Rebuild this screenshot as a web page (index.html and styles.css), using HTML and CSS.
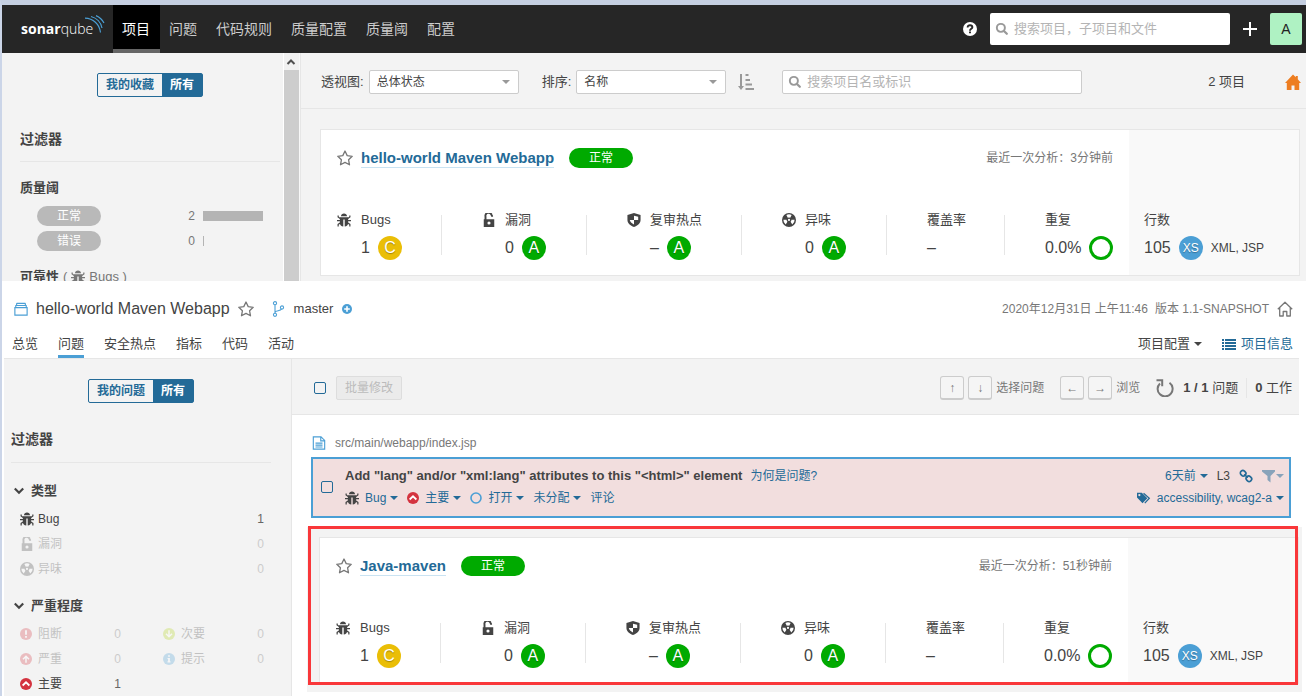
FILE: index.html
```html
<!DOCTYPE html>
<html lang="zh-CN">
<head>
<meta charset="utf-8">
<title>SonarQube</title>
<link rel="stylesheet" href="styles.css">
</head>
<body>
<svg class="sprite" aria-hidden="true">
  <symbol id="bug" viewBox="0 0 16 16"><path fill="currentColor" d="M4.500 3.600C4.800 1.600 6 .6 8 .6s3.200 1 3.500 3zM3.300 4.800h9.400v7c0 2-1.600 3.500-3.900 3.700V7.500H7.200v8c-2.300-.2-3.900-1.700-3.900-3.700z"/><path fill="none" stroke="currentColor" stroke-width="1.400" d="M1.300 2.800v1.800L4 6.500M14.700 2.800v1.800L12 6.500M0 8.800H4M12 8.800h4M4 11.200l-2.700 1.800v2.300M12 11.200l2.700 1.800v2.300"/></symbol>
  <symbol id="lock" viewBox="0 0 16 16"><path fill="none" stroke="currentColor" stroke-width="2.200" d="M4 8V4.200a3.200 3.200 0 0 1 7-1.800c.4.500.6 1 .6 2"/><path fill="currentColor" fill-rule="evenodd" d="M2 7h12v9H2zM8 9.600a1.800 1.800 0 1 0 0 3.600 1.800 1.800 0 0 0 0-3.600z"/></symbol>
  <symbol id="shield" viewBox="0 0 16 16"><path fill="currentColor" fill-rule="evenodd" d="M8 0l7.500 2.200V8c0 3.800-3.200 6.500-7.500 8C3.700 14.500.5 11.800.5 8V2.200zM8 3.200V8h4.800V4.400zM8 8H3.200c.3 2.200 2.200 3.800 4.800 5z"/></symbol>
  <symbol id="smell" viewBox="0 0 16 16"><circle cx="8" cy="8" r="8" fill="currentColor"/><path class="petal" d="M5 2.300a6.500 6.500 0 0 1 6 0L9.400 5.500a3 3 0 0 0-2.800 0zM1.600 7.600A6.400 6.400 0 0 0 4.200 13l2-3a3 3 0 0 1-1-2.200zM14.400 7.600a6.400 6.400 0 0 1-2.600 5.400l-2-3a3 3 0 0 0 1-2.200z"/><circle class="petal" cx="8" cy="7.900" r="1.200"/></symbol>
  <symbol id="star" viewBox="0 0 16 16"><path fill="none" stroke="currentColor" stroke-width="1.300" stroke-linejoin="round" d="M8 1l2.200 4.600 5 .7-3.600 3.500.9 5L8 12.400l-4.500 2.400.9-5L.8 6.300l5-.7z"/></symbol>
  <symbol id="search" viewBox="0 0 16 16"><circle cx="6.700" cy="6.700" r="4.600" fill="none" stroke="currentColor" stroke-width="2.200"/><path stroke="currentColor" stroke-width="2.600" stroke-linecap="round" d="M10.500 10.500l3 3"/></symbol>
  <symbol id="home" viewBox="0 0 16 16"><path fill="currentColor" d="M8 .5l2.800 2.800V2h2v3.300L16 9h-1.800v7H9.500v-4.500h-3V16H1.800V9H0z"/></symbol>
  <symbol id="home-o" viewBox="0 0 16 16"><path fill="none" stroke="currentColor" stroke-width="1.300" stroke-linejoin="round" d="M.8 8.300L8 1.200l7.200 7.100M2.700 6.800V15h3.500v-4.500h3.600V15h3.500V6.800"/></symbol>
  <symbol id="help" viewBox="0 0 16 16"><circle cx="8" cy="8" r="8" fill="#fff"/><path fill="none" stroke="#262626" stroke-width="2.200" d="M5.300 6.300C5.300 4.500 6.500 3.800 8 3.800s2.700.8 2.700 2.200C10.700 7.800 8 7.800 8 10"/><path fill="#262626" d="M6.900 10.900h2.200v2H6.900z"/></symbol>
  <symbol id="sort" viewBox="0 0 16 16"><path fill="none" stroke="currentColor" stroke-width="2" d="M3 0v14"/><path fill="currentColor" d="M0 12h6l-3 4zM7.500 0h3v2h-3zM7.500 5h4.500v2H7.500zM7.500 9.500h6.500v2H7.500zM7.500 14H16v2H7.500z"/></symbol>
  <symbol id="project" viewBox="0 0 16 16"><path fill="none" stroke="currentColor" stroke-width="1.300" d="M1 6.500h14V15H1zM1.500 4h13M3 1.500h10M2 4v2.500M14 4v2.500M3 1.500V4M13 1.500V4"/></symbol>
  <symbol id="branch" viewBox="0 0 16 16"><g fill="none" stroke="currentColor" stroke-width="1.100"><circle cx="5" cy="2.200" r="1.600"/><circle cx="5" cy="13.800" r="1.600"/><circle cx="12" cy="6.500" r="1.600"/><path d="M5 4v8M5 11.500c.5-2.500 5.500-1 6.500-3.500"/></g></symbol>
  <symbol id="plus-c" viewBox="0 0 16 16"><circle cx="8" cy="8" r="8" fill="currentColor"/><path stroke="#fff" stroke-width="2.600" d="M8 3.500v9M3.500 8h9"/></symbol>
  <symbol id="list" viewBox="0 0 14 14"><path stroke="currentColor" stroke-width="2" d="M0 2h2M3 2h11M0 5h2M3 5h11M0 8h2M3 8h11M0 11h2M3 11h11"/></symbol>
  <symbol id="reload" viewBox="0 0 18 18"><path fill="none" stroke="currentColor" stroke-width="2" d="M13.500 3.800a7.500 7.500 0 1 1-9.500.6M.5 1.200h5.700v6"/></symbol>
  <symbol id="chevron" viewBox="0 0 10 8"><path fill="none" stroke="currentColor" stroke-width="2.200" d="M.8 1.500L5 5.700l4.200-4.200"/></symbol>
  <symbol id="blocker" viewBox="0 0 16 16"><circle cx="8" cy="8" r="8" fill="#d4333f"/><path stroke="#fff" stroke-width="2.400" d="M8 3v6M8 10.700v2.400"/></symbol>
  <symbol id="critical" viewBox="0 0 16 16"><circle cx="8" cy="8" r="8" fill="#d4333f"/><path fill="none" stroke="#fff" stroke-width="2" d="M8 13V4.500M4 8.300l4-4 4 4"/></symbol>
  <symbol id="major" viewBox="0 0 16 16"><circle cx="8" cy="8" r="8" fill="#d4333f"/><path fill="none" stroke="#fff" stroke-width="2.400" d="M3.500 10L8 5.800l4.500 4.200"/></symbol>
  <symbol id="minor" viewBox="0 0 16 16"><circle cx="8" cy="8" r="8" fill="#b0d513"/><path fill="none" stroke="#fff" stroke-width="2" d="M8 3v8.500M4 7.700l4 4 4-4"/></symbol>
  <symbol id="info" viewBox="0 0 16 16"><circle cx="8" cy="8" r="8" fill="#4b9fd5"/><path fill="#fff" d="M6.800 3h2.400v2H6.800zM6 6.500h3.200V11H10v1.500H6V11h.8V8H6z"/></symbol>
  <symbol id="file" viewBox="0 0 16 16"><path fill="none" stroke="currentColor" stroke-width="1.300" d="M1.500 1h8.800L14.500 5v10h-13zM10 1v4.500h4.500M4 8.200h8M4 10.400h8M4 12.600h8"/></symbol>
  <symbol id="link" viewBox="0 0 16 16"><g fill="none" stroke="currentColor" stroke-width="1.900"><rect x="1.500" y="2" width="6.400" height="5.600" rx="2.600" transform="rotate(45 4.700 4.800)"/><rect x="8.100" y="8.400" width="6.400" height="5.600" rx="2.600" transform="rotate(45 11.300 11.200)"/><path d="M6 6l4 4"/></g></symbol>
  <symbol id="funnel" viewBox="0 0 14 14"><path fill="currentColor" d="M0 1h13v1.500L8.500 7v6.500l-3-2.500V7L0 2.500z"/></symbol>
  <symbol id="tags" viewBox="0 0 16 14"><path fill="currentColor" fill-rule="evenodd" d="M0 1h5.500l6.300 6.200L6.300 13 0 6.500zM2.700 2.400a1.300 1.300 0 1 0 0 2.600 1.300 1.300 0 0 0 0-2.600z"/><path fill="none" stroke="currentColor" stroke-width="1.400" d="M7.500 1.500l6.600 5.700-5.200 5.600"/></symbol>
</svg>

<header class="topnav">
  <a class="logo" href="#" aria-label="sonarqube"><span class="logo-text"><b>sonar</b>qube</span><svg class="waves" viewBox="0 0 20 20" aria-hidden="true"><g fill="none" stroke="#4b9fd5" stroke-width="1.200"><path d="M0 3.200C8 3.500 14.500 9 15.500 17.500"/><path d="M6 1.500c5.500 1.500 10 6 11 11.500"/><path d="M11 .6c3.500 1.600 6.500 4.400 8 7.400"/></g></svg></a>
  <nav class="mainmenu">
    <a class="active" href="#">项目</a><a href="#">问题</a><a href="#">代码规则</a><a href="#">质量配置</a><a href="#">质量阈</a><a href="#">配置</a>
  </nav>
  <button class="icon-btn help" aria-label="帮助"><svg class="i14"><use href="#help"/></svg></button>
  <label class="search search-top"><svg class="i14"><use href="#search"/></svg><input type="text" aria-label="搜索" placeholder="搜索项目，子项目和文件"></label>
  <button class="icon-btn add" aria-label="新建"><svg class="i14" viewBox="0 0 14 14"><path stroke="#fff" stroke-width="2" d="M7 0v14M0 7h14"/></svg></button>
  <button class="avatar">A</button>
</header>

<div class="projects">
  <aside class="side side-top">
    <div class="toggle"><button>我的收藏</button><button class="on">所有</button></div>
    <h2 class="filters">过滤器</h2>
    <h3 class="facet">质量阈</h3>
    <div class="gate"><span class="pill grey">正常</span><span class="num">2</span><span class="bar full"></span></div>
    <div class="gate"><span class="pill grey">错误</span><span class="num">0</span><span class="bar"></span></div>
    <h3 class="facet clipped">可靠性 <span class="hint">( <svg class="i14"><use href="#bug"/></svg> Bugs )</span></h3>
  </aside>
  <div class="scroll" aria-hidden="true"><svg class="up" viewBox="0 0 10 8"><path fill="none" stroke="#505050" stroke-width="2" d="M1.500 6L5 2.500 8.500 6"/></svg><div class="thumb"></div></div>
  <main class="list">
    <div class="listbar">
      <label for="view">透视图:</label>
      <span class="select"><select id="view"><option>总体状态</option></select></span>
      <label class="sortlabel" for="sortby">排序:</label>
      <span class="select"><select id="sortby"><option>名称</option></select></span>
      <button class="icon-btn sortbtn" aria-label="升序"><svg class="i16"><use href="#sort"/></svg></button>
      <label class="search search-list"><svg class="i14"><use href="#search"/></svg><input type="text" aria-label="搜索项目" placeholder="搜索项目名或标识"></label>
      <span class="count">2 项目</span>
      <button class="icon-btn homebtn" aria-label="主页"><svg class="i16"><use href="#home"/></svg></button>
    </div>
    <article class="card card-first">
      <div class="body">
        <div class="cardhead">
          <button class="icon-btn star" aria-label="收藏"><svg class="i16"><use href="#star"/></svg></button>
          <a class="name" href="#">hello-world Maven Webapp</a><span class="pill ok">正常</span>
          <span class="when">最近一次分析：3分钟前</span>
        </div>
        <div class="measures">
          <div class="m first"><svg class="i14"><use href="#bug"/></svg><span>Bugs</span><div class="v">1<i class="rate c">C</i></div></div>
          <div class="m"><svg class="i14"><use href="#lock"/></svg><span>漏洞</span><div class="v">0<i class="rate">A</i></div></div>
          <div class="m"><svg class="i14"><use href="#shield"/></svg><span>复审热点</span><div class="v">–<i class="rate">A</i></div></div>
          <div class="m"><svg class="i14"><use href="#smell"/></svg><span>异味</span><div class="v">0<i class="rate">A</i></div></div>
          <div class="m plain"><span>覆盖率</span><div class="v">–</div></div>
          <div class="m plain"><span>重复</span><div class="v">0.0%<i class="rate ring"></i></div></div>
        </div>
      </div>
      <div class="size"><span>行数</span><div class="v">105<i class="rate xs">XS</i><small>XML, JSP</small></div></div>
    </article>
  </main>
</div>

<section class="project">
  <header class="phead">
    <div class="prow">
      <svg class="i14 blue"><use href="#project"/></svg>
      <span class="pname">hello-world Maven Webapp</span>
      <button class="icon-btn star" aria-label="收藏"><svg class="i16"><use href="#star"/></svg></button>
      <svg class="i16 blue branch"><use href="#branch"/></svg>
      <span class="master">master</span>
      <svg class="i10 blue"><use href="#plus-c"/></svg>
      <span class="meta"><span>2020年12月31日 上午11:46</span><span>版本 1.1-SNAPSHOT</span></span>
      <button class="icon-btn star" aria-label="设为主页"><svg class="i16"><use href="#home-o"/></svg></button>
    </div>
    <nav class="tabs">
      <a href="#">总览</a><a class="on" href="#">问题</a><a href="#">安全热点</a><a href="#">指标</a><a href="#">代码</a><a href="#">活动</a>
      <a class="config caret" href="#">项目配置</a>
      <a class="info" href="#"><svg class="i14"><use href="#list"/></svg>项目信息</a>
    </nav>
  </header>
  <div class="issues">
    <aside class="side side-issues">
      <div class="toggle"><button>我的问题</button><button class="on">所有</button></div>
      <h2 class="filters">过滤器</h2>
      <h3 class="fold"><svg class="chev"><use href="#chevron"/></svg>类型</h3>
      <div class="rows">
        <div class="row"><svg class="i14"><use href="#bug"/></svg><span>Bug</span><b>1</b></div>
        <div class="row off"><svg class="i14"><use href="#lock"/></svg><span>漏洞</span><b>0</b></div>
        <div class="row off"><svg class="i14"><use href="#smell"/></svg><span>异味</span><b>0</b></div>
      </div>
      <h3 class="fold"><svg class="chev"><use href="#chevron"/></svg>严重程度</h3>
      <div class="rows two">
        <div class="row off"><svg class="i12"><use href="#blocker"/></svg><span>阻断</span><b>0</b></div>
        <div class="row off"><svg class="i12"><use href="#minor"/></svg><span>次要</span><b>0</b></div>
        <div class="row off"><svg class="i12"><use href="#critical"/></svg><span>严重</span><b>0</b></div>
        <div class="row off"><svg class="i12"><use href="#info"/></svg><span>提示</span><b>0</b></div>
        <div class="row"><svg class="i12"><use href="#major"/></svg><span>主要</span><b>1</b></div>
      </div>
    </aside>
    <main class="issuemain">
      <div class="issuebar">
        <input class="check" type="checkbox" aria-label="全选">
        <button class="bulk" disabled>批量修改</button>
        <span class="keys"><kbd>↑</kbd><kbd>↓</kbd>选择问题</span>
        <span class="keys"><kbd>←</kbd><kbd>→</kbd>浏览</span>
        <button class="icon-btn reload" aria-label="刷新"><svg class="i18"><use href="#reload"/></svg></button>
        <span class="total"><b>1 / 1</b> 问题</span>
        <span class="effort"><b>0</b> 工作</span>
      </div>
      <div class="path"><svg class="i14 blue"><use href="#file"/></svg>src/main/webapp/index.jsp</div>
      <div class="issue">
        <input class="check" type="checkbox" aria-label="选择问题">
        <div class="text">
          <div class="line"><strong>Add "lang" and/or "xml:lang" attributes to this "&lt;html&gt;" element</strong><a href="#">为何是问题?</a></div>
          <div class="line acts">
            <a class="caret" href="#"><svg class="i14 dark"><use href="#bug"/></svg>Bug</a>
            <a class="caret" href="#"><svg class="i12"><use href="#major"/></svg>主要</a>
            <a class="caret" href="#"><svg class="i12" viewBox="0 0 12 12"><circle cx="6" cy="6" r="5" fill="none" stroke="#4b9fd5" stroke-width="1.600"/></svg>打开</a>
            <a class="caret" href="#">未分配</a>
            <a href="#">评论</a>
          </div>
        </div>
        <div class="right">
          <div class="line acts"><a class="caret" href="#">6天前</a><span>L3</span><a href="#" aria-label="链接"><svg class="i14"><use href="#link"/></svg></a><a class="caret filter" href="#" aria-label="过滤"><svg class="i14"><use href="#funnel"/></svg></a></div>
          <div class="line acts"><a class="caret tags" href="#"><svg class="i14"><use href="#tags"/></svg>accessibility, wcag2-a</a></div>
        </div>
      </div>
      <div class="highlight">
        <article class="card">
          <div class="body">
            <div class="cardhead">
              <button class="icon-btn star" aria-label="收藏"><svg class="i16"><use href="#star"/></svg></button>
              <a class="name" href="#">Java-maven</a><span class="pill ok">正常</span>
              <span class="when">最近一次分析：51秒钟前</span>
            </div>
            <div class="measures">
              <div class="m first"><svg class="i14"><use href="#bug"/></svg><span>Bugs</span><div class="v">1<i class="rate c">C</i></div></div>
              <div class="m"><svg class="i14"><use href="#lock"/></svg><span>漏洞</span><div class="v">0<i class="rate">A</i></div></div>
              <div class="m"><svg class="i14"><use href="#shield"/></svg><span>复审热点</span><div class="v">–<i class="rate">A</i></div></div>
              <div class="m"><svg class="i14"><use href="#smell"/></svg><span>异味</span><div class="v">0<i class="rate">A</i></div></div>
              <div class="m plain"><span>覆盖率</span><div class="v">–</div></div>
              <div class="m plain"><span>重复</span><div class="v">0.0%<i class="rate ring"></i></div></div>
            </div>
          </div>
          <div class="size"><span>行数</span><div class="v">105<i class="rate xs">XS</i><small>XML, JSP</small></div></div>
        </article>
      </div>
    </main>
  </div>
</section>
</body>
</html>
```

FILE: styles.css
```css
* { box-sizing: border-box; }
body {
  margin: 0;
  min-height: 100vh;
  border-top: 5px solid #c5cfe1;
  border-left: 2px solid #cbd5e8;
  background: #fff;
  color: #444;
  font: 13px/20px "Liberation Sans", "Noto Sans CJK SC", sans-serif;
}
button, input, select { font: inherit; color: inherit; margin: 0; padding: 0; }
button { border: 0; background: none; }
a { color: #236a97; text-decoration: none; }
h2, h3 { margin: 0; font-weight: bold; }
svg { flex: none; display: block; }
.sprite { position: absolute; width: 0; height: 0; }
.petal { fill: #fff; }
.i10 { width: 10px; height: 10px; }
.i12 { width: 12px; height: 12px; }
.i14 { width: 14px; height: 14px; }
.i16 { width: 16px; height: 16px; }
.i18 { width: 18px; height: 18px; }
.blue { color: #4b9fd5; }
.dark { color: #444; }
.icon-btn { display: flex; flex: none; }
.star { color: #777; }

.topnav { display: flex; align-items: center; height: 48px; padding-right: 4px; background: #262626; }
.logo { display: flex; width: 111px; padding-left: 19px; color: #fff; }
.logo-text { font: 300 14px/20px "Open Sans", sans-serif; }
.logo-text b { font-weight: 700; }
.waves { width: 20px; height: 20px; margin: -4px 0 0 -8px; }
.mainmenu { display: flex; flex: 1; align-self: stretch; }
.mainmenu a { padding: 0 10px 0 9px; color: #ccc; font-size: 14px; line-height: 48px; }
.mainmenu .active { background: #000; color: #fff; border-bottom: 4px solid #666; }
.help { margin-right: 13px; }
.search { display: flex; align-items: center; gap: 5px; padding-left: 5px; background: #fff; border-radius: 2px; color: #999; }
.search input { flex: 1; min-width: 0; border: 0; outline: 0; background: none; color: #444; }
.search input::placeholder { color: #b4b4b4; opacity: 1; }
.search-top { width: 240px; height: 32px; }
.add { margin: 0 13px; }
.avatar { width: 32px; height: 32px; border-radius: 2px; background: #aff2c3; color: #222; font-size: 14px; }

.projects { display: flex; background: #f3f3f3; }
.side { flex: none; background: #f3f3f3; }
.side-top { width: 281px; padding: 20px 3px 0 18px; }
.toggle { display: flex; width: max-content; height: 24px; border: 1px solid #236a97; border-radius: 2px; font-size: 12px; font-weight: bold; color: #236a97; }
.toggle button { padding: 0 8px; font-weight: bold; }
.toggle .on { background: #236a97; color: #fff; }
.side-top .toggle { margin-left: 77px; }
.filters { margin: 32px 0 16px; padding-bottom: 12px; border-bottom: 1px solid #e6e6e6; font-size: 14px; }
.facet { margin-bottom: 8px; font-size: 13px; }
.pill { display: block; flex: none; width: 64px; border-radius: 10px; text-align: center; color: #fff; font-size: 12px; }
.grey { background: #b9b9b9; }
.ok { background: #0a0; font-size: 12px; }
.gate { display: flex; align-items: center; margin: 0 0 5px 17px; font-size: 12px; color: #777; }
.num { width: 94px; text-align: right; }
.bar { width: 1px; height: 10px; margin-left: 8px; background: #b4b4b4; }
.full { width: 60px; }
.clipped { display: flex; gap: 4px; height: 14px; margin: 16px 0 0; overflow: hidden; }
.hint { display: flex; align-items: center; gap: 4px; height: 20px; font-weight: normal; color: #777; }
.scroll { width: 17px; background: #f1f1f1; border-left: 1px solid #fff; border-right: 1px solid #f8f8f8; display: flex; flex-direction: column; }
.up { width: 10px; height: 8px; margin: 5px 0 4px 2px; }
.thumb { flex: 1; background: #cdcdcd; }
.list { flex: 1; min-width: 0; border-left: 1px solid #e6e6e6; padding-bottom: 5px; }
.listbar { display: flex; align-items: center; height: 56px; padding: 2px 5px 0 20px; border-bottom: 1px solid #e6e6e6; }
.select { position: relative; width: 150px; height: 24px; margin-left: 5px; }
.select select { width: 100%; height: 24px; padding: 0 24px 0 7px; appearance: none; border: 1px solid #ccc; border-radius: 2px; background: #fff; font-size: 12px; }
.select::after { content: ""; position: absolute; right: 9px; top: 10px; border: 4px solid transparent; border-top-color: #999; border-bottom: 0; }
.sortlabel { margin-left: 23px; }
.sortbtn { margin: 0 28px 0 12px; color: #999; }
.search-list { width: 300px; height: 24px; border: 1px solid #ccc; }
.count { margin-left: auto; }
.homebtn { margin-left: 40px; color: #ed7d20; }

.card { display: flex; border: 1px solid #e6e6e6; background: #fff; }
.card-first { margin: 20px 6px 0 19px; }
.body { flex: 1; min-width: 0; }
.cardhead { display: flex; align-items: center; padding: 18px 16px 0; }
.name { margin: 0 15px 0 8px; border-bottom: 1px solid #cae3f2; font-size: 15px; font-weight: bold; line-height: 18px; }
.when { margin-left: auto; color: #777; font-size: 12px; }
.measures { display: grid; grid-template-columns: 121fr 145fr 155fr 145fr 118fr 124fr; padding: 42px 0 15px; }
.m { display: grid; grid-template-columns: 14px 1fr; column-gap: 9px; align-items: center; align-content: start; padding-left: 40px; position: relative; }
.m:not(:last-child)::after { content: ""; position: absolute; right: 0; top: 5px; height: 40px; border-right: 1px solid #e6e6e6; }
.first { padding-left: 16px; column-gap: 10px; }
.m .v { grid-column: 2; }
.plain { grid-template-columns: 1fr; }
.plain .v { grid-column: 1; }
.v { display: flex; align-items: center; gap: 8px; margin-top: 6px; font-size: 16px; line-height: 24px; }
.rate { width: 24px; height: 24px; border-radius: 12px; background: #0a0; color: #fff; font-style: normal; text-align: center; text-shadow: 0 1px 1px rgba(0, 0, 0, .3); }
.c { background: #eabe06; }
.ring { border: 3px solid #0a0; background: none; }
.xs { background: #4b9fd5; font-size: 12px; }
.v small { font-size: 12px; }
.size { width: 170px; padding: 80px 0 0 15px; background: #f9f9f9; }

.project { padding: 0 7px 2px 2px; }
.phead { border-bottom: 1px solid #e6e6e6; padding: 16px 6px 0 8px; }
.prow { display: flex; align-items: center; height: 24px; padding-left: 2px; }
.pname { margin: 0 8px; font-size: 16px; }
.branch { margin: 0 8px 0 16px; }
.master { margin-right: 9px; }
.meta { display: flex; gap: 7px; margin: 0 8px 0 auto; font-size: 12px; color: #777; }
.tabs { display: flex; gap: 20px; margin-top: 11px; }
.tabs a { height: 26px; color: #444; line-height: 24px; }
.tabs .on { border-bottom: 3px solid #4b9fd5; }
.tabs .config { margin-left: auto; }
.tabs .info { display: flex; gap: 5px; color: #236a97; }
.info svg { margin-top: 6px; }
.caret { display: flex; align-items: center; gap: 4px; }
.caret::after { content: ""; border: 4px solid transparent; border-top-color: currentColor; border-bottom: 0; }
.tabs .caret { height: 24px; }
.issues { display: flex; }
.side-issues { width: 288px; border-right: 1px solid #e6e6e6; padding: 20px 20px 0 7px; }
.side-issues .toggle { margin-left: 77px; }
.side-issues .filters { margin: 26px 0 18px; padding-bottom: 13px; }
.fold { display: flex; align-items: center; gap: 7px; padding-left: 3px; font-size: 13px; }
.chev { width: 10px; height: 8px; }
.rows { margin: 5px 7px 15px 9px; }
.row { display: flex; align-items: center; height: 25px; font-size: 12px; }
.row svg + span { margin-left: 4px; }
.row .i12 + span { margin-left: 6px; }
.row b { margin-left: auto; font-weight: normal; color: #666; }
.off { opacity: .28; }
.two { display: grid; grid-template-columns: 1fr 1fr; column-gap: 42px; margin-bottom: 0; }
.issuemain { flex: 1; min-width: 0; }
.issuebar { display: flex; align-items: center; height: 56px; padding: 2px 7px 0 22px; background: #f3f3f3; border-bottom: 1px solid #e6e6e6; }
.check { appearance: none; flex: none; width: 12px; height: 12px; border: 1px solid #236a97; border-radius: 2px; background: transparent; }
.bulk { height: 24px; margin: 0 auto 0 10px; padding: 0 8px; border: 1px solid #ddd; border-radius: 2px; background: #ebebeb; color: #bbb; font-size: 12px; }
.keys { display: flex; align-items: center; gap: 4px; margin-right: 16px; font-size: 12px; color: #777; }
.keys kbd { width: 24px; height: 24px; border: 1px solid #ccc; border-bottom-width: 2px; border-radius: 3px; background: #f5f5f5; text-align: center; font: 12px/22px "Liberation Sans", sans-serif; }
.reload { color: #777; }
.total { margin: 0 8px 0 9px; padding-right: 8px; border-right: 1px solid #e6e6e6; }
.path { display: flex; align-items: center; gap: 9px; margin: 18px 0 4px 20px; font-size: 12px; color: #777; }
.issue { display: flex; align-items: center; gap: 12px; margin: 0 8px 0 19px; padding: 6px 5px 7px 8px; border: 2px solid #4b9fd5; background: #f2dede; font-size: 12px; }
.issue .petal { fill: #f2dede; }
.text { flex: 1; }
.line { display: flex; align-items: center; gap: 8px; height: 22px; }
.line strong { font-size: 13px; }
.acts { gap: 9px; }
.text .acts svg, .tags svg { margin-right: 2px; }
.right .line { justify-content: flex-end; }
.filter { opacity: .5; gap: 0; }
.highlight { position: relative; margin: 9px -3px 0 15px; padding: 10px 3px 8px 12px; background: #f3f3f3; }
.highlight::after { content: ""; position: absolute; inset: -1px 4px 7px 1px; border: 3px solid #f9373a; pointer-events: none; }
```
